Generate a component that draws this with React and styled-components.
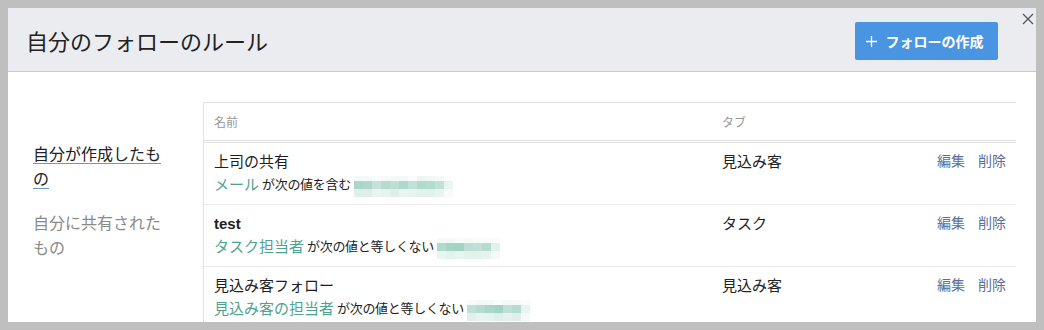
import React from 'react';
import styled, { createGlobalStyle } from 'styled-components';

const GlobalStyle = createGlobalStyle`
  html, body {
    margin: 0;
    padding: 0;
  }
  body {
    background: #bfbfbf;
    padding: 8px;
    height: 330px;
    box-sizing: border-box;
    overflow: hidden;
    font-family: "Liberation Sans", "Noto Sans CJK JP", sans-serif;
    color: #222;
  }
`;

const Modal = styled.div`
  position: relative;
  background: #fff;
  height: 314px;
  overflow: hidden;
`;

const Header = styled.div`
  height: 63px;
  background: #ebecf0;
  border-bottom: 1px solid #c9c9cb;
  display: flex;
  align-items: center;
  justify-content: space-between;
  padding: 0 38px 0 18px;
`;

const Title = styled.h1`
  margin: 0;
  font-size: 22px;
  font-weight: 400;
  color: #222;
`;

const CreateButton = styled.button`
  margin-top: 3px;
  width: 143px;
  height: 38px;
  border: none;
  border-radius: 2px;
  background: #4a95e2;
  color: #fff;
  font-family: inherit;
  font-size: 14px;
  font-weight: 700;
  display: flex;
  align-items: center;
  justify-content: center;
  gap: 9px;
  padding: 0 4px 0 0;
  cursor: pointer;
`;

const CloseButton = styled.button`
  position: absolute;
  top: 4px;
  right: 1px;
  width: 14px;
  height: 14px;
  padding: 0;
  border: none;
  background: transparent;
  display: flex;
  align-items: center;
  justify-content: center;
  cursor: pointer;
`;

const Body = styled.div`
  display: flex;
  padding: 30px 20px 0 25px;
`;

const Nav = styled.nav`
  width: 170px;
  flex-shrink: 0;
  box-sizing: border-box;
  padding: 40px 36px 0 0;
`;

const NavItem = styled.div`
  font-size: 16px;
  line-height: 25px;
  margin-bottom: 19px;
  color: ${(p) => (p.$active ? '#222' : '#8a8a8a')};

  span {
    border-bottom: ${(p) => (p.$active ? '1px solid #6b97c9' : 'none')};
  }
`;

const Table = styled.div`
  flex: 1;
  border-left: 1px solid #e2e2e2;
  border-top: 1px solid #e2e2e2;
`;

const HeadRow = styled.div`
  display: grid;
  grid-template-columns: 508px 1fr;
  height: 37px;
  align-items: center;
  border-bottom: 3px double #dedede;
  font-size: 12px;
  color: #999;
`;

const Row = styled.div`
  display: grid;
  grid-template-columns: 508px 1fr auto;
  height: 62px;
  box-sizing: border-box;
  padding-top: 8px;
  border-bottom: 1px solid #ececec;
  font-size: 15px;
  line-height: 21px;
`;

const Cell = styled.div`
  padding: 0 10px;
  white-space: nowrap;
`;

const RuleName = styled.div`
  font-weight: ${(p) => (p.$latin ? 700 : 400)};
  color: #1e1e1e;
`;

const Condition = styled.div`
  display: flex;
  align-items: center;
`;

const Field = styled.span`
  color: #4fa28f;
  font-size: 15px;
  margin-right: 3px;
`;

const Operator = styled.span`
  font-size: 13px;
  color: #222;
  letter-spacing: -0.3px;
  margin-right: 3px;
`;

const Mosaic = styled.span`
  display: inline-grid;
  grid-template-columns: repeat(${(p) => p.$cols}, 9px);
  grid-template-rows: 5px 8px 8px;
  margin-top: 4px;
`;

const Pixel = styled.span`
  background: ${(p) => p.$c};
`;

const Actions = styled.div`
  display: flex;
  gap: 13px;
  padding-right: 10px;
  font-size: 14px;
  color: #5c6f9c;
`;

const ActionLink = styled.a`
  cursor: pointer;
`;

const mix = (t) => {
  const a = [255, 255, 255];
  const b = [150, 205, 188];
  const c = a.map((v, i) => Math.round(v + (b[i] - v) * t));
  return `rgb(${c.join(',')})`;
};

function Blur({ cols, seed }) {
  const cells = [];
  let s = seed;
  const rnd = () => {
    s = (s * 9301 + 49297) % 233280;
    return s / 233280;
  };
  const base = [0.12, 0.72, 0.25];
  for (let r = 0; r < 3; r++) {
    for (let c = 0; c < cols; c++) {
      let t = base[r] + (rnd() - 0.5) * (r === 1 ? 0.35 : 0.14);
      if (c === cols - 1) t *= 0.35;
      cells.push(<Pixel key={r + '-' + c} $c={mix(Math.max(0, Math.min(1, t)))} />);
    }
  }
  return <Mosaic $cols={cols}>{cells}</Mosaic>;
}

const rules = [
  { name: '上司の共有', field: 'メール', op: 'が次の値を含む', tab: '見込み客', cols: 11, seed: 7 },
  { name: 'test', latin: true, field: 'タスク担当者', op: 'が次の値と等しくない', tab: 'タスク', cols: 7, seed: 31 },
  { name: '見込み客フォロー', field: '見込み客の担当者', op: 'が次の値と等しくない', tab: '見込み客', cols: 7, seed: 99 },
];

export default function App() {
  return (
    <>
      <GlobalStyle />
      <Modal>
        <Header>
          <Title>自分のフォローのルール</Title>
          <CreateButton>
            <svg width="11" height="11" viewBox="0 0 11 11">
              <path d="M5.5 0v11M0 5.5h11" stroke="#fff" strokeWidth="1.3" />
            </svg>
            フォローの作成
          </CreateButton>
        </Header>
        <CloseButton aria-label="閉じる">
          <svg width="12" height="12" viewBox="0 0 12 12">
            <path d="M1 1l10 10M11 1L1 11" stroke="#555" strokeWidth="1.3" />
          </svg>
        </CloseButton>
        <Body>
          <Nav>
            <NavItem $active>
              <span>自分が作成したもの</span>
            </NavItem>
            <NavItem>
              <span>自分に共有されたもの</span>
            </NavItem>
          </Nav>
          <Table>
            <HeadRow>
              <Cell>名前</Cell>
              <Cell>タブ</Cell>
            </HeadRow>
            {rules.map((rule) => (
              <Row key={rule.name}>
                <Cell>
                  <RuleName $latin={rule.latin}>{rule.name}</RuleName>
                  <Condition>
                    <Field>{rule.field}</Field>
                    <Operator>{rule.op}</Operator>
                    <Blur cols={rule.cols} seed={rule.seed} />
                  </Condition>
                </Cell>
                <Cell>{rule.tab}</Cell>
                <Actions>
                  <ActionLink>編集</ActionLink>
                  <ActionLink>削除</ActionLink>
                </Actions>
              </Row>
            ))}
          </Table>
        </Body>
      </Modal>
    </>
  );
}
